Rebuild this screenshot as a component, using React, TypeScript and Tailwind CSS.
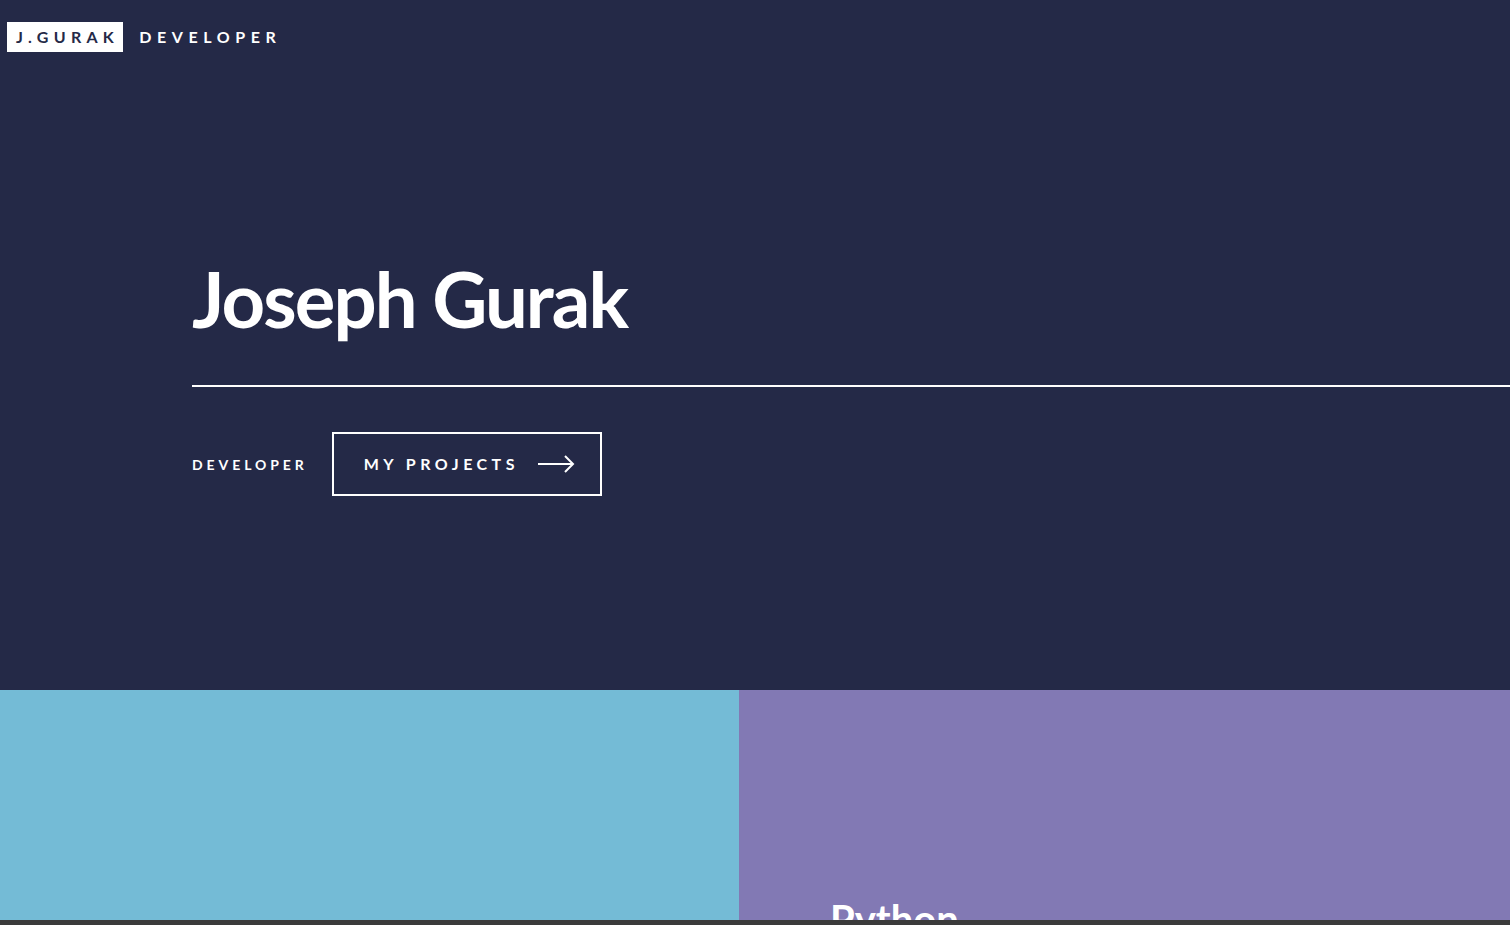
const ArrowRight = () => (
    <svg width="37" height="18" viewBox="0 0 37 18" fill="none" stroke="white" strokeWidth="2">
        <line x1="0" y1="9" x2="35" y2="9" />
        <polyline points="27,1 35,9 27,17" />
    </svg>
);

const App = () => {
    return (
        <div
            className="h-[925px] w-full overflow-hidden flex flex-col bg-[#242947]"
            style={{ fontFamily: 'Lato, "Noto Sans", sans-serif' }}
        >
            {/* 헤더 */}
            <header className="h-[690px] shrink-0 flex flex-col">
                <div className="flex items-center pt-[22px] pl-[7px]">
                    <div className="h-[30px] bg-white flex items-center pl-[9px] pr-[4px] text-[16px] font-bold tracking-[0.33em] text-[#242947]">
                        J.GURAK
                    </div>
                    <span className="ml-[16px] text-[16px] font-bold tracking-[0.35em] text-white">
                        DEVELOPER
                    </span>
                </div>

                <div className="pl-[192px] pt-[202px]">
                    <h1 className="text-[76px] leading-[90px] font-bold text-white tracking-[-0.025em]">
                        Joseph Gurak
                    </h1>
                    <div className="mt-[41px] h-[2px] bg-white" />
                    <div className="mt-[45px] flex items-center">
                        <span className="text-[14px] font-bold tracking-[0.28em] text-white">
                            DEVELOPER
                        </span>
                        <button className="ml-[24px] h-[64px] w-[270px] border-2 border-white flex items-center pl-[30px] gap-[19px]">
                            <span className="text-[16px] font-bold tracking-[0.28em] text-white">
                                MY PROJECTS
                            </span>
                            <ArrowRight />
                        </button>
                    </div>
                </div>
            </header>

            {/* 카드 */}
            <div className="flex flex-1 min-h-0">
                <div className="w-[739px] bg-[#74bbd6]" />
                <div className="flex-1 bg-[#8279b4] pl-[91px] pt-[205px] overflow-hidden">
                    <h2 className="text-[40px] leading-[48px] font-bold text-white">Python</h2>
                </div>
            </div>
            <div className="h-[5px] shrink-0 bg-[#3b3b3b]" />
        </div>
    );
};

export default App;
